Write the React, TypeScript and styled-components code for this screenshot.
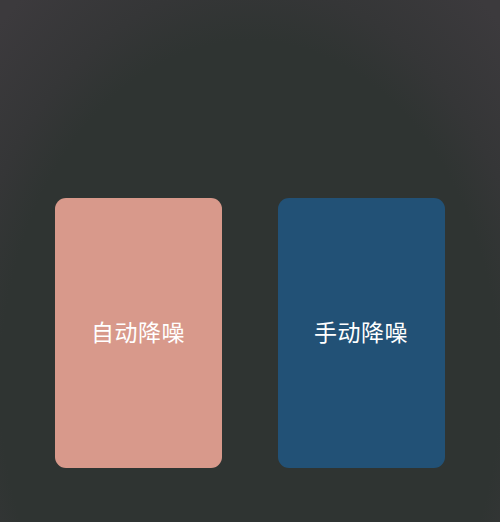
import React from 'react'
import styled, { createGlobalStyle } from 'styled-components'

const GlobalStyle = createGlobalStyle`
  html, body {
    margin: 0;
    padding: 0;
    height: 100%;
  }

  body {
    font-family: "Noto Sans CJK SC", "Noto Sans", sans-serif;
  }
`

const modes = [
  { label: '自动降噪', color: '#d8998b' },
  { label: '手动降噪', color: '#225176' },
]

function App() {
  return (
    <>
      <GlobalStyle />
      <SScreen>
        <SCardRow>
          {modes.map((mode) => (
            <SModeCard key={mode.label} color={mode.color}>
              {mode.label}
            </SModeCard>
          ))}
        </SCardRow>
      </SScreen>
    </>
  )
}

export default App

const SScreen = styled.div`
  background: radial-gradient(
    ellipse 290px 400px at 250px 385px,
    #2f3432 0%,
    #2f3432 86%,
    #353637 100%,
    #3c3a3d 125%
  );
  box-sizing: border-box;
  height: 522px;
  padding-top: 198px;
  width: 500px;
`

const SCardRow = styled.div`
  display: flex;
  gap: 56px;
  justify-content: center;
  padding-right: 1px;
`

const SModeCard = styled.div<{ color: string }>`
  align-items: center;
  background-color: ${({ color }) => color};
  border-radius: 11px;
  box-sizing: border-box;
  color: #ffffff;
  display: flex;
  font-size: 23px;
  height: 270px;
  justify-content: center;
  letter-spacing: 0.5px;
  padding-bottom: 4px;
  width: 167px;
`
